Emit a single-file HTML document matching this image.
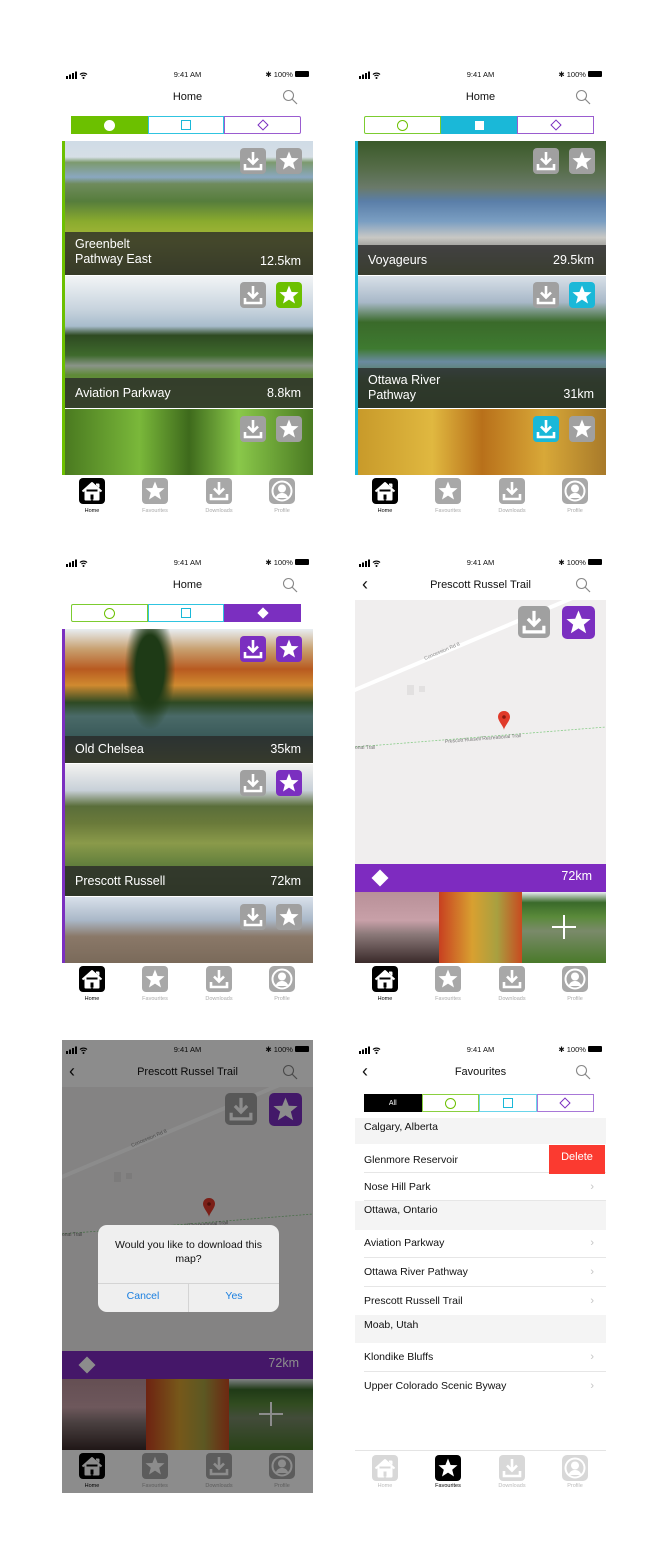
<!DOCTYPE html>
<html><head><meta charset="utf-8"><style>
*{box-sizing:border-box;margin:0;padding:0}
body{width:666px;height:1560px;background:#fff;position:relative;overflow:hidden;font-family:"Liberation Sans",Arial,sans-serif;color:#111}
.s{position:absolute;width:251px;height:455px;overflow:hidden;background:#fff}
.ab{position:absolute}
.st{position:absolute;top:5px;left:0;width:251px;height:10px;font-size:7.5px}
.st .t{position:absolute;left:0;width:100%;text-align:center}
.st .r{position:absolute;right:4px}
.st .l{position:absolute;left:4px;top:1px}
.ti{position:absolute;top:25px;left:0;width:251px;text-align:center;font-size:11px;line-height:14px}
.srch{position:absolute;left:220px;top:24px}
.seg{position:absolute;top:51px;left:9px;width:230px;height:18px;display:flex}
.seg div{flex:1;display:flex;align-items:center;justify-content:center;border:1px solid;height:18px}
.card{position:absolute;left:3px;width:248px;overflow:hidden}
.bar{position:absolute;left:0;top:76px;width:3px;height:334px}
.nb{position:absolute;left:0;bottom:0;width:100%;background:rgba(40,40,40,.78);color:#fff;font-size:12.5px;line-height:15px;padding:0 10px}
.nb .k{position:absolute;right:12px;bottom:6px}
.ic{position:absolute;width:26px;height:26px}
.tab{position:absolute;top:413px;width:26px;height:26px}
.tl{position:absolute;top:443px;font-size:5.5px;color:#aaa;width:60px;text-align:center}
.row{position:absolute;left:9px;width:242px;font-size:10.5px;border-bottom:1px solid #e6e6e6}
.hd{position:absolute;left:0;width:251px;background:#f4f4f4;font-size:10.5px;padding-left:9px}
.chev{position:absolute;right:12px;color:#c4c4c4;font-size:11px}
</style></head><body>
<svg width="0" height="0" style="position:absolute">
<defs>
<symbol id="dl" viewBox="0 0 26 26"><rect width="26" height="26" rx="4" fill="currentColor"/><path d="M13 4v11M8 10.5l5 5 5-5M5 16v5h16v-5" stroke="#fff" stroke-width="2.6" fill="none"/></symbol>
<symbol id="st" viewBox="0 0 26 26"><rect width="26" height="26" rx="4" fill="currentColor"/><polygon points="13,3.5 15.6,10 22.5,10.3 17.2,14.7 19,21.5 13,17.6 7,21.5 8.8,14.7 3.5,10.3 10.4,10" fill="#fff"/></symbol>
<symbol id="hm" viewBox="0 0 26 26"><rect width="26" height="26" rx="4" fill="currentColor"/><path d="M3.5 13.5L13 5l9.5 8.5M6.5 11.5v10h5v-5h3v5h5v-10M17 6.5h2.5v3" stroke="#fff" stroke-width="2" fill="#fff" stroke-linejoin="round"/><rect x="11.5" y="16.5" width="3" height="5" fill="currentColor"/></symbol>
<symbol id="pr" viewBox="0 0 26 26"><rect width="26" height="26" rx="5" fill="currentColor"/><circle cx="13" cy="13" r="9.5" fill="none" stroke="#fff" stroke-width="2"/><circle cx="13" cy="10.5" r="4" fill="#fff"/><path d="M6.5 20c1.5-4 4-5 6.5-5s5 1 6.5 5" fill="#fff"/></symbol>
<symbol id="sr" viewBox="0 0 16 16"><circle cx="6.5" cy="6.5" r="5" fill="none" stroke="#888" stroke-width="1.1"/><path d="M10 10l5 5" stroke="#888" stroke-width="1.2"/></symbol>
<symbol id="sb" viewBox="0 0 25 8"><rect x="0" y="5" width="2" height="3" fill="#000"/><rect x="3" y="3.5" width="2" height="4.5" fill="#000"/><rect x="6" y="2" width="2" height="6" fill="#000"/><rect x="9" y="0.5" width="2" height="7.5" fill="#000"/><path d="M14 3.5a5 5 0 0 1 7 0M15.5 5a3 3 0 0 1 4 0" stroke="#000" stroke-width="1.2" fill="none"/><circle cx="17.5" cy="7" r="1" fill="#000"/></symbol>
</defs></svg>

<!-- ============ SCREEN 1 ============ -->
<div class="s" style="left:62px;top:65px">
 <div class="st"><svg class="l" width="25" height="8"><use href="#sb"/></svg><span class="t">9:41 AM</span><span class="r">✱ 100% <span style="display:inline-block;width:14px;height:6px;background:#000;border-radius:1px;vertical-align:0"></span></span></div>
 <div class="ti">Home</div>
 <svg class="srch" width="16" height="16"><use href="#sr"/></svg>
 <div class="seg"><div style="background:#6cc000;border-color:#6cc000"><span style="width:11px;height:11px;border-radius:50%;background:#fff"></span></div><div style="border-color:#30c4e0"><span style="width:10px;height:10px;border:1.3px solid #1ab8d8"></span></div><div style="border-color:#9a5cd0;border-radius:0 2px 2px 0"><span style="width:8px;height:8px;border:1.3px solid #7b2fc0;transform:rotate(45deg)"></span></div></div>
 <div class="bar" style="background:#6cc000"></div>
 <div class="card" style="top:76px;height:134px;background:linear-gradient(#cfdbe6 0%,#d6dfe6 12%,#7c9a6e 16%,#8aa7c0 27%,#6f8b5c 32%,#567d3c 45%,#8aab2e 60%,#a8b83a 75%,#6f7f2c 100%)">
  <svg class="ic" style="left:175px;top:7px;color:#a0a0a0"><use href="#dl"/></svg><svg class="ic" style="left:211px;top:7px;color:#a0a0a0"><use href="#st"/></svg>
  <div class="nb" style="height:43px;padding-top:5px">Greenbelt<br>Pathway East<span class="k">12.5km</span></div></div>
 <div class="card" style="top:211px;height:132px;background:linear-gradient(#f2f4f6 0%,#c8d4de 25%,#a8bccc 38%,#2e4a22 45%,#3e6a2c 60%,#8a9488 68%,#5f8a38 75%,#6a9a3a 100%)">
  <svg class="ic" style="left:175px;top:6px;color:#a0a0a0"><use href="#dl"/></svg><svg class="ic" style="left:211px;top:6px;color:#6cc000"><use href="#st"/></svg>
  <div class="nb" style="height:30px;padding-top:8px">Aviation Parkway<span class="k" style="bottom:7px">8.8km</span></div></div>
 <div class="card" style="top:344px;height:66px;background:linear-gradient(90deg,#4a7a20,#7ab83a 30%,#3e6a1c 50%,#8ac84a 70%,#4a7a22)">
  <svg class="ic" style="left:175px;top:7px;color:#a0a0a0"><use href="#dl"/></svg><svg class="ic" style="left:211px;top:7px;color:#a0a0a0"><use href="#st"/></svg></div>
 <svg class="tab" style="left:17px;color:#000"><use href="#hm"/></svg><svg class="tab" style="left:80px;color:#a8a8a8"><use href="#st"/></svg><svg class="tab" style="left:144px;color:#a8a8a8"><use href="#dl"/></svg><svg class="tab" style="left:207px;color:#a8a8a8"><use href="#pr"/></svg>
 <div class="tl" style="left:0;color:#000">Home</div><div class="tl" style="left:63px">Favourites</div><div class="tl" style="left:127px">Downloads</div><div class="tl" style="left:190px">Profile</div>
</div>

<!-- ============ SCREEN 2 ============ -->
<div class="s" style="left:355px;top:65px">
 <div class="st"><svg class="l" width="25" height="8"><use href="#sb"/></svg><span class="t">9:41 AM</span><span class="r">✱ 100% <span style="display:inline-block;width:14px;height:6px;background:#000;border-radius:1px"></span></span></div>
 <div class="ti">Home</div>
 <svg class="srch" width="16" height="16"><use href="#sr"/></svg>
 <div class="seg"><div style="border-color:#7ccc30;border-radius:2px 0 0 2px"><span style="width:11px;height:11px;border-radius:50%;border:1.3px solid #6cc000"></span></div><div style="background:#1ab8d8;border-color:#1ab8d8"><span style="width:9px;height:9px;background:#fff"></span></div><div style="border-color:#9a5cd0"><span style="width:8px;height:8px;border:1.3px solid #7b2fc0;transform:rotate(45deg)"></span></div></div>
 <div class="bar" style="background:#1ab8d8"></div>
 <div class="card" style="top:76px;height:134px;background:linear-gradient(#3a5a2a 0%,#556c48 20%,#6a7a6a 35%,#5a7ea8 45%,#7a9ec2 60%,#c8c8c4 72%,#9a9a96 80%,#7a8a4a 100%)">
  <svg class="ic" style="left:175px;top:7px;color:#a0a0a0"><use href="#dl"/></svg><svg class="ic" style="left:211px;top:7px;color:#a0a0a0"><use href="#st"/></svg>
  <div class="nb" style="height:30px;padding-top:8px">Voyageurs<span class="k" style="bottom:7px">29.5km</span></div></div>
 <div class="card" style="top:211px;height:132px;background:linear-gradient(#d8e0e8 0%,#a8b8c8 20%,#3a6a2a 35%,#3e7a30 55%,#6a8aa0 65%,#4a7a3a 80%,#3a6a28 100%)">
  <svg class="ic" style="left:175px;top:6px;color:#a0a0a0"><use href="#dl"/></svg><svg class="ic" style="left:211px;top:6px;color:#1ab8d8"><use href="#st"/></svg>
  <div class="nb" style="height:40px;padding-top:5px">Ottawa River<br>Pathway<span class="k">31km</span></div></div>
 <div class="card" style="top:344px;height:66px;background:linear-gradient(90deg,#c89a2a,#e0b840 30%,#b8701a 50%,#d8a838 75%,#a87a2a)">
  <svg class="ic" style="left:175px;top:7px;color:#1ab8d8"><use href="#dl"/></svg><svg class="ic" style="left:211px;top:7px;color:#a0a0a0"><use href="#st"/></svg></div>
 <svg class="tab" style="left:17px;color:#000"><use href="#hm"/></svg><svg class="tab" style="left:80px;color:#a8a8a8"><use href="#st"/></svg><svg class="tab" style="left:144px;color:#a8a8a8"><use href="#dl"/></svg><svg class="tab" style="left:207px;color:#a8a8a8"><use href="#pr"/></svg>
 <div class="tl" style="left:0;color:#000">Home</div><div class="tl" style="left:63px">Favourites</div><div class="tl" style="left:127px">Downloads</div><div class="tl" style="left:190px">Profile</div>
</div>

<!-- ============ SCREEN 3 ============ -->
<div class="s" style="left:62px;top:553px">
 <div class="st"><svg class="l" width="25" height="8"><use href="#sb"/></svg><span class="t">9:41 AM</span><span class="r">✱ 100% <span style="display:inline-block;width:14px;height:6px;background:#000;border-radius:1px"></span></span></div>
 <div class="ti">Home</div>
 <svg class="srch" width="16" height="16"><use href="#sr"/></svg>
 <div class="seg"><div style="border-color:#7ccc30;border-radius:2px 0 0 2px"><span style="width:11px;height:11px;border-radius:50%;border:1.3px solid #6cc000"></span></div><div style="border-color:#30c4e0"><span style="width:10px;height:10px;border:1.3px solid #1ab8d8"></span></div><div style="background:#7b2fc0;border-color:#7b2fc0"><span style="width:8px;height:8px;background:#fff;transform:rotate(45deg)"></span></div></div>
 <div class="bar" style="background:#7b2fc0"></div>
 <div class="card" style="top:76px;height:134px;background:linear-gradient(#e8eef2 0%,#c8a070 15%,#b85a20 30%,#d08a30 42%,#2e4a24 55%,#4a6a68 65%,#3a5a5a 80%,#6a7a3a 100%)">
  <div class="ab" style="left:60px;top:0;width:50px;height:100px;background:radial-gradient(ellipse at 50% 40%,#1e3a16 40%,transparent 72%)"></div>
  <svg class="ic" style="left:175px;top:7px;color:#7b2fc0"><use href="#dl"/></svg><svg class="ic" style="left:211px;top:7px;color:#7b2fc0"><use href="#st"/></svg>
  <div class="nb" style="height:27px;padding-top:6px">Old Chelsea<span class="k" style="bottom:6px">35km</span></div></div>
 <div class="card" style="top:211px;height:132px;background:linear-gradient(#f2f2f0 0%,#c8d0d8 20%,#5a6e3a 32%,#6a7a3a 45%,#8a9a4a 60%,#5a7a3a 80%,#4a6a2a 100%)">
  <svg class="ic" style="left:175px;top:6px;color:#a0a0a0"><use href="#dl"/></svg><svg class="ic" style="left:211px;top:6px;color:#7b2fc0"><use href="#st"/></svg>
  <div class="nb" style="height:30px;padding-top:8px">Prescott Russell<span class="k" style="bottom:7px">72km</span></div></div>
 <div class="card" style="top:344px;height:66px;background:linear-gradient(#d8e0ea 0%,#aab8c8 35%,#8a7868 60%,#7a6a5a 100%)">
  <svg class="ic" style="left:175px;top:7px;color:#a0a0a0"><use href="#dl"/></svg><svg class="ic" style="left:211px;top:7px;color:#a0a0a0"><use href="#st"/></svg></div>
 <svg class="tab" style="left:17px;color:#000"><use href="#hm"/></svg><svg class="tab" style="left:80px;color:#a8a8a8"><use href="#st"/></svg><svg class="tab" style="left:144px;color:#a8a8a8"><use href="#dl"/></svg><svg class="tab" style="left:207px;color:#a8a8a8"><use href="#pr"/></svg>
 <div class="tl" style="left:0;color:#000">Home</div><div class="tl" style="left:63px">Favourites</div><div class="tl" style="left:127px">Downloads</div><div class="tl" style="left:190px">Profile</div>
</div>

<!-- ============ SCREEN 4 & 5 (map) ============ -->
<div class="s" style="left:355px;top:553px">
 <div class="st"><svg class="l" width="25" height="8"><use href="#sb"/></svg><span class="t">9:41 AM</span><span class="r">✱ 100% <span style="display:inline-block;width:14px;height:6px;background:#000;border-radius:1px"></span></span></div>
 <div class="ab" style="left:7px;top:23px;font-size:18px;line-height:16px">‹</div>
 <div class="ti">Prescott Russel Trail</div>
 <svg class="srch" width="16" height="16"><use href="#sr"/></svg>
 <div class="ab" style="left:0;top:47px;width:251px;height:264px;background:#f0eeee;overflow:hidden">
  <svg width="251" height="264" style="position:absolute;left:0;top:0">
   <line x1="-5" y1="92" x2="260" y2="-20" stroke="#fff" stroke-width="4"/>
   <text x="70" y="60" font-size="5" fill="#888" transform="rotate(-23 70 60)" font-family="Liberation Sans">Concession Rd 8</text>
   <rect x="52" y="85" width="7" height="10" fill="#e2e0e0"/><rect x="64" y="86" width="6" height="6" fill="#e2e0e0"/>
   <line x1="0" y1="147" x2="251" y2="127" stroke="#8c8" stroke-width="0.8" stroke-dasharray="2 1.5"/>
   <text x="90" y="143" font-size="5" fill="#777" transform="rotate(-4.5 90 143)" font-family="Liberation Sans">Prescott Russell Recreational Trail</text>
   <text x="0" y="149" font-size="5" fill="#777" font-family="Liberation Sans">onal Trail</text>
   <path d="M149 111c-4 0-6 3-6 6 0 4 6 10 6 13 0-3 6-9 6-13 0-3-2-6-6-6z" fill="#e03a2a"/><circle cx="149" cy="117" r="1.8" fill="#8a1a10"/>
  </svg>
  <svg class="ic" style="left:163px;top:6px;width:32px;height:32px;color:#a0a0a0"><use href="#dl"/></svg>
  <svg class="ic" style="left:207px;top:6px;width:33px;height:33px;color:#7b2fc0"><use href="#st"/></svg>
 </div>
 <div class="ab" style="left:0;top:311px;width:251px;height:28px;background:#7e2bc0"><span class="ab" style="left:19px;top:8px;width:12px;height:12px;background:#fff;transform:rotate(45deg)"></span><span class="ab" style="right:14px;top:5px;color:#fff;font-size:12.5px">72km</span></div>
 <div class="ab" style="left:0;top:339px;width:84px;height:71px;background:linear-gradient(#b89098,#c8a0a8 40%,#8a7878 60%,#3a2a2a)"></div>
 <div class="ab" style="left:84px;top:339px;width:83px;height:71px;background:linear-gradient(90deg,#c84020,#d8a030 40%,#a8a040 70%,#c84a20)"></div>
 <div class="ab" style="left:167px;top:339px;width:84px;height:71px;background:linear-gradient(#e8ecf0 0%,#3a6a2a 15%,#5a8a3a 35%,#7a8a6a 55%,#4a7a2a 100%)"><span class="ab" style="left:30px;top:34px;width:24px;height:2px;background:#fff"></span><span class="ab" style="left:41px;top:23px;width:2px;height:24px;background:#fff"></span></div>
 <svg class="tab" style="left:17px;color:#000"><use href="#hm"/></svg><svg class="tab" style="left:80px;color:#a8a8a8"><use href="#st"/></svg><svg class="tab" style="left:144px;color:#a8a8a8"><use href="#dl"/></svg><svg class="tab" style="left:207px;color:#a8a8a8"><use href="#pr"/></svg>
 <div class="tl" style="left:0;color:#000">Home</div><div class="tl" style="left:63px">Favourites</div><div class="tl" style="left:127px">Downloads</div><div class="tl" style="left:190px">Profile</div>
</div>

<div class="s" style="left:62px;top:1040px;height:453px">
 <div class="st"><svg class="l" width="25" height="8"><use href="#sb"/></svg><span class="t">9:41 AM</span><span class="r">✱ 100% <span style="display:inline-block;width:14px;height:6px;background:#000;border-radius:1px"></span></span></div>
 <div class="ab" style="left:7px;top:23px;font-size:18px;line-height:16px">‹</div>
 <div class="ti">Prescott Russel Trail</div>
 <svg class="srch" width="16" height="16"><use href="#sr"/></svg>
 <div class="ab" style="left:0;top:47px;width:251px;height:264px;background:#f0eeee;overflow:hidden">
  <svg width="251" height="264" style="position:absolute;left:0;top:0">
   <line x1="-5" y1="92" x2="260" y2="-20" stroke="#fff" stroke-width="4"/>
   <text x="70" y="60" font-size="5" fill="#888" transform="rotate(-23 70 60)" font-family="Liberation Sans">Concession Rd 8</text>
   <rect x="52" y="85" width="7" height="10" fill="#e2e0e0"/><rect x="64" y="86" width="6" height="6" fill="#e2e0e0"/>
   <line x1="0" y1="147" x2="251" y2="127" stroke="#8c8" stroke-width="0.8" stroke-dasharray="2 1.5"/>
   <text x="90" y="143" font-size="5" fill="#777" transform="rotate(-4.5 90 143)" font-family="Liberation Sans">Prescott Russell Recreational Trail</text>
   <text x="0" y="149" font-size="5" fill="#777" font-family="Liberation Sans">onal Trail</text>
   <path d="M147 111c-4 0-6 3-6 6 0 4 6 10 6 13 0-3 6-9 6-13 0-3-2-6-6-6z" fill="#e03a2a"/><circle cx="147" cy="117" r="1.8" fill="#8a1a10"/>
  </svg>
  <svg class="ic" style="left:163px;top:6px;width:32px;height:32px;color:#a0a0a0"><use href="#dl"/></svg>
  <svg class="ic" style="left:207px;top:6px;width:33px;height:33px;color:#7b2fc0"><use href="#st"/></svg>
 </div>
 <div class="ab" style="left:0;top:311px;width:251px;height:28px;background:#7e2bc0"><span class="ab" style="left:19px;top:8px;width:12px;height:12px;background:#fff;transform:rotate(45deg)"></span><span class="ab" style="right:14px;top:5px;color:#fff;font-size:12.5px">72km</span></div>
 <div class="ab" style="left:0;top:339px;width:84px;height:71px;background:linear-gradient(#b89098,#c8a0a8 40%,#8a7878 60%,#3a2a2a)"></div>
 <div class="ab" style="left:84px;top:339px;width:83px;height:71px;background:linear-gradient(90deg,#c84020,#d8a030 40%,#a8a040 70%,#c84a20)"></div>
 <div class="ab" style="left:167px;top:339px;width:84px;height:71px;background:linear-gradient(#e8ecf0 0%,#3a6a2a 15%,#5a8a3a 35%,#7a8a6a 55%,#4a7a2a 100%)"><span class="ab" style="left:30px;top:34px;width:24px;height:2px;background:#fff"></span><span class="ab" style="left:41px;top:23px;width:2px;height:24px;background:#fff"></span></div>
 <svg class="tab" style="left:17px;color:#000"><use href="#hm"/></svg><svg class="tab" style="left:80px;color:#a8a8a8"><use href="#st"/></svg><svg class="tab" style="left:144px;color:#a8a8a8"><use href="#dl"/></svg><svg class="tab" style="left:207px;color:#a8a8a8"><use href="#pr"/></svg>
 <div class="tl" style="left:0;color:#000">Home</div><div class="tl" style="left:63px">Favourites</div><div class="tl" style="left:127px">Downloads</div><div class="tl" style="left:190px">Profile</div>
 <div class="ab" style="left:0;top:0;width:251px;height:453px;background:rgba(0,0,0,.45)"></div>
 <div class="ab" style="left:36px;top:185px;width:181px;height:87px;background:#efefef;border-radius:9px;text-align:center">
  <div style="font-size:10.5px;line-height:14px;padding-top:13px;color:#111">Would you like to download this<br>map?</div>
  <div class="ab" style="left:0;top:58px;width:181px;height:1px;background:#d4d4d4"></div>
  <div class="ab" style="left:90px;top:58px;width:1px;height:29px;background:#d4d4d4"></div>
  <div class="ab" style="left:0;top:65px;width:90px;font-size:10.5px;color:#1a7fe0">Cancel</div>
  <div class="ab" style="left:91px;top:65px;width:90px;font-size:10.5px;color:#1a7fe0">Yes</div>
 </div>
</div>

<!-- ============ SCREEN 6 ============ -->
<div class="s" style="left:355px;top:1040px;height:453px">
 <div class="st"><svg class="l" width="25" height="8"><use href="#sb"/></svg><span class="t">9:41 AM</span><span class="r">✱ 100% <span style="display:inline-block;width:14px;height:6px;background:#000;border-radius:1px"></span></span></div>
 <div class="ab" style="left:7px;top:23px;font-size:18px;line-height:16px">‹</div>
 <div class="ti">Favourites</div>
 <svg class="srch" width="16" height="16"><use href="#sr"/></svg>
 <div class="seg" style="top:54px;height:18px"><div style="background:#000;border-color:#000;color:#fff;font-size:7px">All</div><div style="border-color:#8ad040"><span style="width:11px;height:11px;border-radius:50%;border:1.3px solid #6cc000"></span></div><div style="border-color:#6ad4ea"><span style="width:10px;height:10px;border:1.3px solid #1ab8d8"></span></div><div style="border-color:#a878d8"><span style="width:8px;height:8px;border:1.3px solid #7b2fc0;transform:rotate(45deg)"></span></div></div>
 <div class="hd" style="top:78px;height:26px;padding-top:3px">Calgary, Alberta</div>
 <div class="row" style="top:105px;height:28px;padding-top:9px">Glenmore Reservoir</div>
 <div class="ab" style="left:194px;top:105px;width:56px;height:29px;background:#fb3a30;color:#fff;font-size:11px;text-align:center;padding-top:6px">Delete</div>
 <div class="row" style="top:134px;height:27px;padding-top:7px">Nose Hill Park<span class="chev">›</span></div>
 <div class="hd" style="top:161px;height:29px;padding-top:3px">Ottawa, Ontario</div>
 <div class="row" style="top:190px;height:28px;padding-top:7px">Aviation Parkway<span class="chev">›</span></div>
 <div class="row" style="top:218px;height:29px;padding-top:8px">Ottawa River Pathway<span class="chev">›</span></div>
 <div class="row" style="top:247px;height:28px;padding-top:8px;border:none">Prescott Russell Trail<span class="chev">›</span></div>
 <div class="hd" style="top:275px;height:28px;padding-top:4px">Moab, Utah</div>
 <div class="row" style="top:303px;height:29px;padding-top:8px">Klondike Bluffs<span class="chev">›</span></div>
 <div class="row" style="top:332px;height:29px;padding-top:8px;border:none">Upper Colorado Scenic Byway<span class="chev">›</span></div>
 <div class="ab" style="left:0;top:410px;width:251px;height:1px;background:#e4e4e4"></div>
 <svg class="tab" style="top:415px;left:17px;color:#d8d8d8"><use href="#hm"/></svg><svg class="tab" style="top:415px;left:80px;color:#000"><use href="#st"/></svg><svg class="tab" style="top:415px;left:144px;color:#d8d8d8"><use href="#dl"/></svg><svg class="tab" style="top:415px;left:207px;color:#d8d8d8"><use href="#pr"/></svg>
 <div class="tl" style="top:443px;left:0;color:#bbb">Home</div><div class="tl" style="top:443px;left:63px;color:#000">Favourites</div><div class="tl" style="top:443px;left:127px;color:#bbb">Downloads</div><div class="tl" style="top:443px;left:190px;color:#bbb">Profile</div>
</div>
</body></html>
